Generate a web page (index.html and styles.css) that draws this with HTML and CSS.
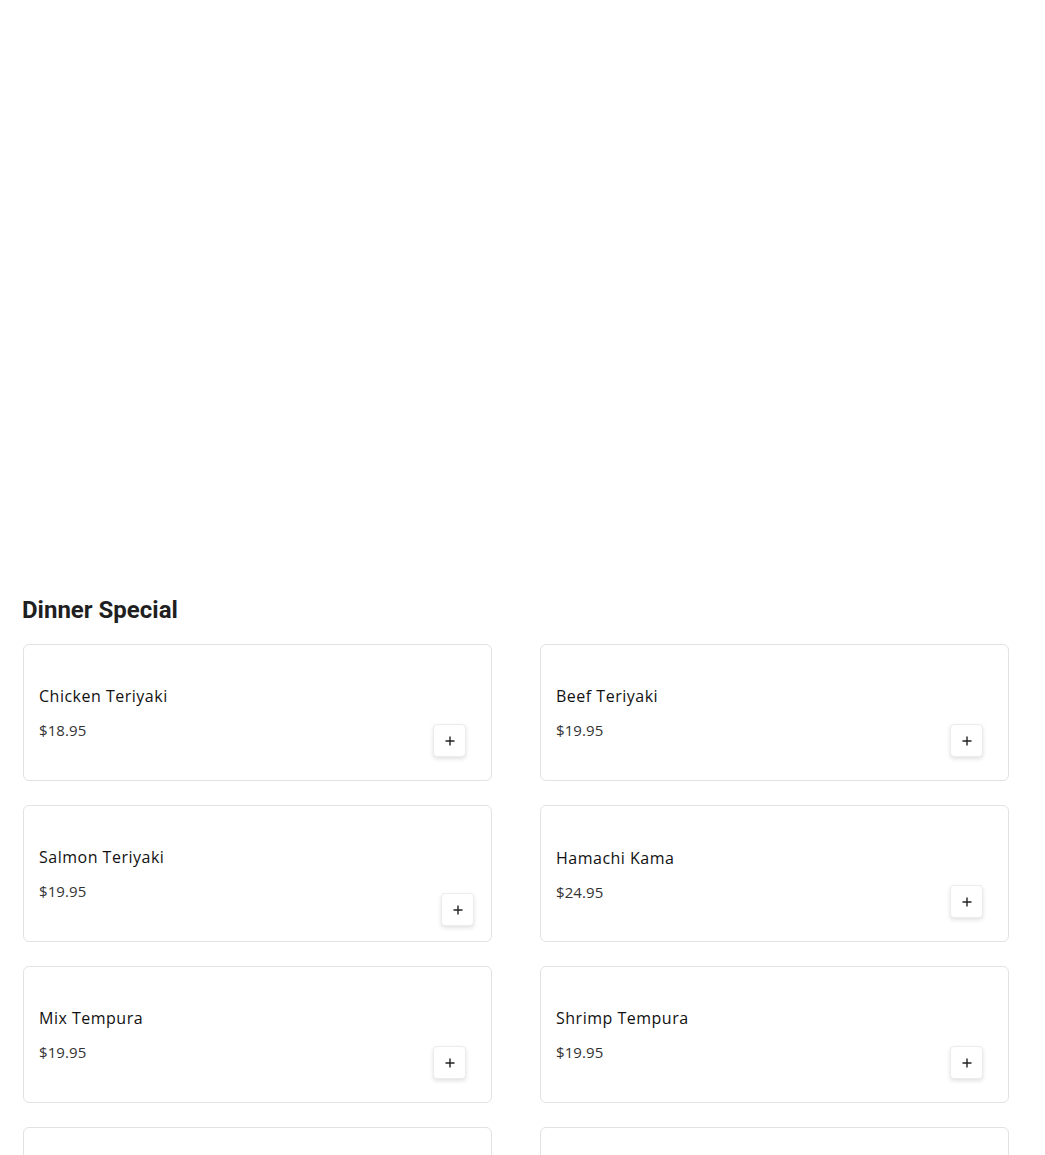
FILE: index.html
```html
<!DOCTYPE html>
<html lang="en">
<head>
<meta charset="utf-8">
<title>Dinner Special</title>
<link rel="stylesheet" href="styles.css">
</head>
<body>
<div class="hero"></div>
<section class="menu">
  <h2 class="menu-title">Dinner Special</h2>
  <div class="grid">
    <div class="card">
      <div class="info"><div class="name">Chicken Teriyaki</div><div class="price">$18.95</div></div>
      <button class="add" aria-label="Add"><svg viewBox="0 0 10 10" width="10" height="10"><path d="M5 0.5v9M0.5 5h9" stroke="#222" stroke-width="1.4" fill="none"/></svg></button>
    </div>
    <div class="card">
      <div class="info"><div class="name">Beef Teriyaki</div><div class="price">$19.95</div></div>
      <button class="add" aria-label="Add"><svg viewBox="0 0 10 10" width="10" height="10"><path d="M5 0.5v9M0.5 5h9" stroke="#222" stroke-width="1.4" fill="none"/></svg></button>
    </div>
    <div class="card">
      <div class="info"><div class="name">Salmon Teriyaki</div><div class="price">$19.95</div></div>
      <button class="add add-low" aria-label="Add"><svg viewBox="0 0 10 10" width="10" height="10"><path d="M5 0.5v9M0.5 5h9" stroke="#222" stroke-width="1.4" fill="none"/></svg></button>
    </div>
    <div class="card">
      <div class="info info-low"><div class="name">Hamachi Kama</div><div class="price">$24.95</div></div>
      <button class="add" aria-label="Add"><svg viewBox="0 0 10 10" width="10" height="10"><path d="M5 0.5v9M0.5 5h9" stroke="#222" stroke-width="1.4" fill="none"/></svg></button>
    </div>
    <div class="card">
      <div class="info"><div class="name">Mix Tempura</div><div class="price">$19.95</div></div>
      <button class="add" aria-label="Add"><svg viewBox="0 0 10 10" width="10" height="10"><path d="M5 0.5v9M0.5 5h9" stroke="#222" stroke-width="1.4" fill="none"/></svg></button>
    </div>
    <div class="card">
      <div class="info"><div class="name">Shrimp Tempura</div><div class="price">$19.95</div></div>
      <button class="add" aria-label="Add"><svg viewBox="0 0 10 10" width="10" height="10"><path d="M5 0.5v9M0.5 5h9" stroke="#222" stroke-width="1.4" fill="none"/></svg></button>
    </div>
    <div class="card"></div>
    <div class="card"></div>
  </div>
</section>
</body>
</html>
```
FILE: styles.css
```css
* { box-sizing: border-box; }
body {
  margin: 0;
  background: #fff;
  font-family: "Open Sans", "Liberation Sans", sans-serif;
  color: #222;
}
.hero { height: 594px; }
.menu { padding: 0 36px 0 23px; }
.menu-title {
  margin: 0 0 18px -1px;
  font-family: Roboto, "Liberation Sans", sans-serif;
  font-weight: 700;
  font-size: 24px;
  line-height: 32px;
  color: #1f1f1f;
}
.grid {
  display: grid;
  grid-template-columns: 469px 469px;
  column-gap: 48px;
  row-gap: 24px;
}
.card {
  height: 137px;
  border: 1px solid #e2e2e2;
  border-radius: 6px;
  padding: 40px 17px 0 15px;
  display: flex;
  justify-content: space-between;
}
.info { display: flex; flex-direction: column; gap: 12px; }
.info-low { margin-top: 1px; }
.name { font-size: 16px; font-weight: 500; line-height: 22px; letter-spacing: 0.5px; color: #111; }
.price { font-size: 15px; line-height: 22px; letter-spacing: 0.1px; color: #333; }
.add {
  width: 33px;
  height: 33px;
  margin: 39px 8px 0 0;
  border: 1px solid #ececec;
  border-radius: 4px;
  background: #fff;
  box-shadow: 0 2px 4px rgba(0,0,0,0.12);
  padding: 0;
  display: flex;
  align-items: center;
  justify-content: center;
}
.add-low { margin: 47px 0 0 0; }
```
